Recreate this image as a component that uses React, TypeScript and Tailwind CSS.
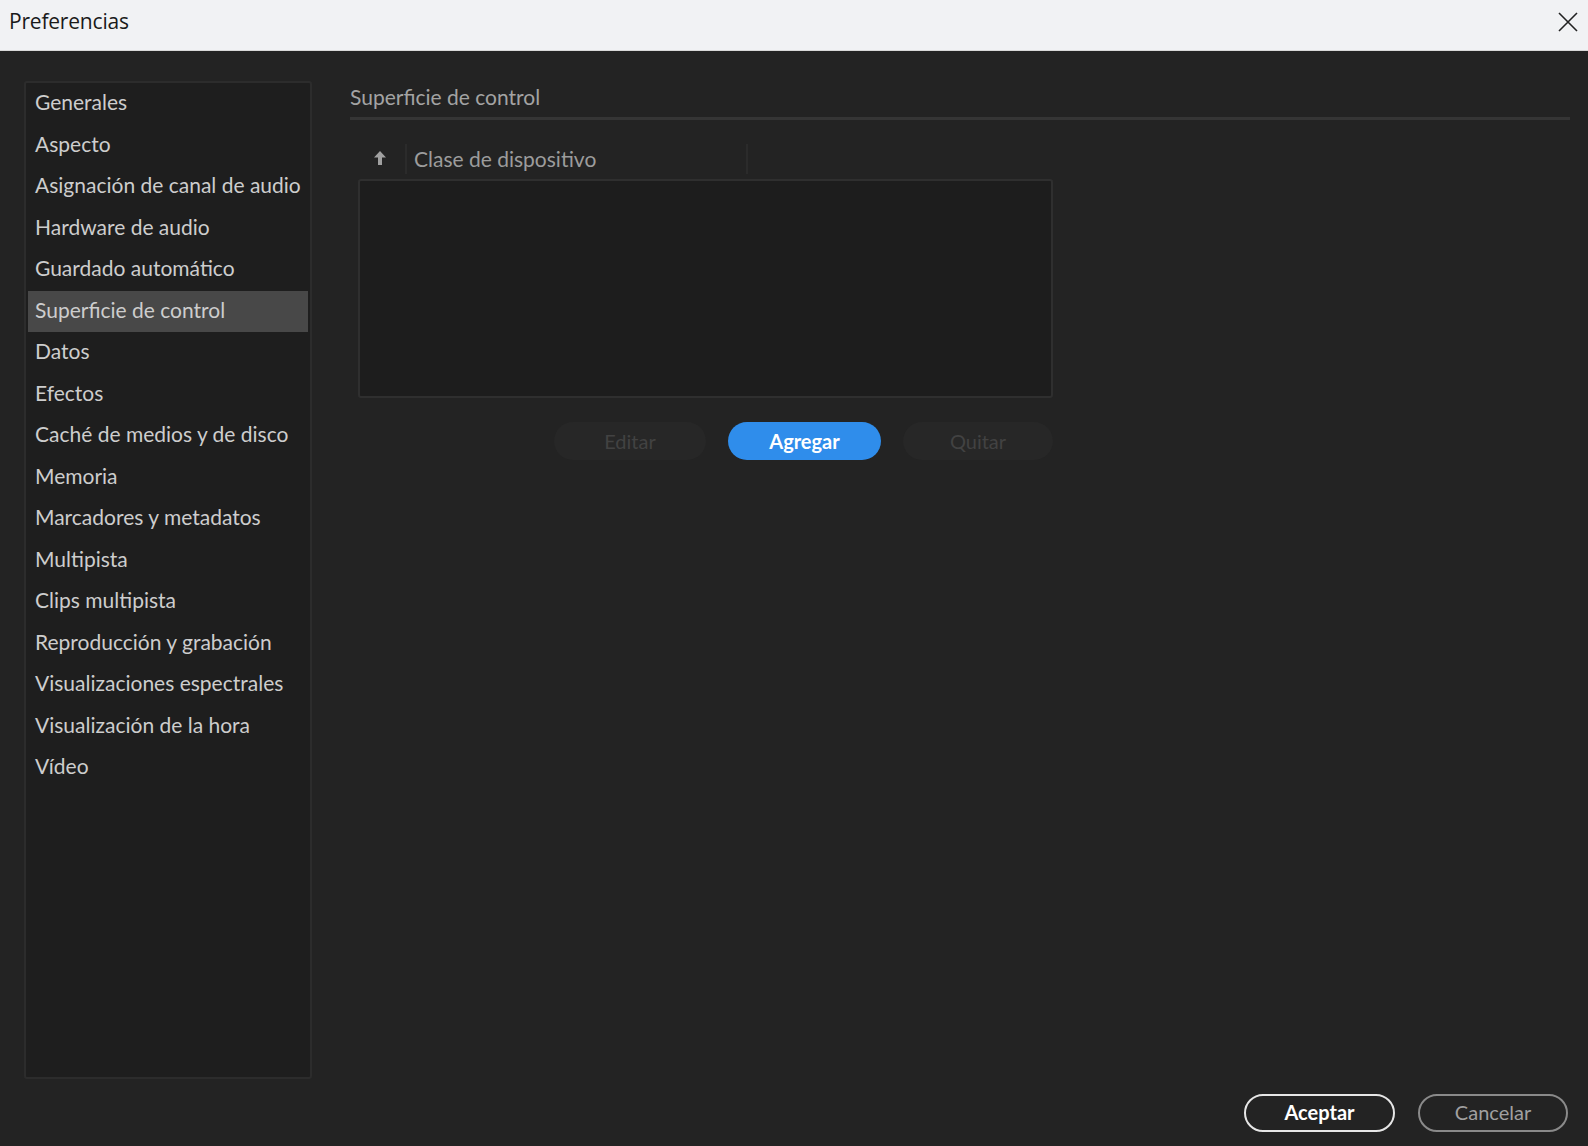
import { useState } from "react";

const sections = [
  "Generales",
  "Aspecto",
  "Asignación de canal de audio",
  "Hardware de audio",
  "Guardado automático",
  "Superficie de control",
  "Datos",
  "Efectos",
  "Caché de medios y de disco",
  "Memoria",
  "Marcadores y metadatos",
  "Multipista",
  "Clips multipista",
  "Reproducción y grabación",
  "Visualizaciones espectrales",
  "Visualización de la hora",
  "Vídeo",
];

export default function App() {
  const [active, setActive] = useState("Superficie de control");

  return (
    <div className="w-[1588px] h-[1146px] flex flex-col bg-[#232323] font-['Lato','Open_Sans',sans-serif] overflow-hidden">
      {/* window title bar */}
      <div className="h-[51px] shrink-0 flex items-center justify-between bg-[#f1f2f4] border-b border-[#d8d8d8] pl-[9px] pr-[8px] pb-[6px]">
        <span className="text-[21px] text-[#1a1a1a] font-['Open_Sans',sans-serif] tracking-[-0.2px]">Preferencias</span>
        <button className="w-[24px] h-[24px] flex items-center justify-center text-[#222]">
          <svg width="22" height="22" viewBox="0 0 22 22" fill="none" stroke="currentColor" strokeWidth="1.6">
            <path d="M2 2 L20 20 M20 2 L2 20" />
          </svg>
        </button>
      </div>

      <div className="flex-1 flex pl-[24px] pt-[30px]">
        {/* section list */}
        <nav className="w-[288px] h-[998px] shrink-0 bg-[#1e1e1e] border-2 border-[#2c2c2c] rounded-[3px] px-[2px]">
          {sections.map((s) => (
            <div
              key={s}
              onClick={() => setActive(s)}
              className={`h-[41.5px] flex items-center pl-[7px] pb-[4px] text-[21px] text-[#cdcdcd] whitespace-nowrap cursor-default ${
                active === s ? "bg-[#484848]" : ""
              }`}
            >
              {s}
            </div>
          ))}
        </nav>

        {/* panel */}
        <div className="ml-[38px] w-[1220px] flex flex-col">
          <div className="pt-[2px] pb-[6px] leading-[28px] text-[21px] text-[#a3a3a3] border-b-[3px] border-[#353535]">
            Superficie de control
          </div>

          <div className="ml-[8px] w-[695px] mt-[24px] flex flex-col">
            <div className="h-[30px] flex items-center">
              <div className="w-[49px] h-full flex items-center justify-center border-r-2 border-[#2b2b2b]">
                <svg width="14" height="16" viewBox="0 0 14 16" fill="#a0a0a0" className="mr-[4px] mb-[3px]">
                  <path d="M7 1 L13 7.5 L9 7.5 L9 15 L5 15 L5 7.5 L1 7.5 Z" />
                </svg>
              </div>
              <div className="w-[341px] h-full flex items-center pl-[7px] border-r-2 border-[#2b2b2b] text-[21px] text-[#9c9c9c]">
                Clase de dispositivo
              </div>
            </div>

            <div className="mt-[5px] h-[219px] bg-[#1d1d1d] border-2 border-[#2f2f2f] rounded-[3px]" />

            <div className="mt-[24px] flex justify-end gap-[22px]">
              <button disabled className="w-[152px] h-[38px] rounded-full bg-[#272727] text-[20px] text-[#424242]">
                Editar
              </button>
              <button className="w-[153px] h-[38px] rounded-full bg-[#2f8deb] text-[20px] font-bold text-white">
                Agregar
              </button>
              <button disabled className="w-[150px] h-[38px] rounded-full bg-[#272727] text-[20px] text-[#424242]">
                Quitar
              </button>
            </div>
          </div>
        </div>
      </div>

      {/* dialog actions */}
      <div className="h-[67px] shrink-0 flex justify-end gap-[23px] pt-[15px] pr-[20px]">
        <button className="w-[151px] h-[38px] rounded-full border-2 border-[#e6e6e6] text-[20px] font-bold text-white pb-[2px]">
          Aceptar
        </button>
        <button className="w-[150px] h-[38px] rounded-full border-2 border-[#8a8a8a] text-[20px] text-[#a0a0a0] pb-[2px]">
          Cancelar
        </button>
      </div>
    </div>
  );
}
